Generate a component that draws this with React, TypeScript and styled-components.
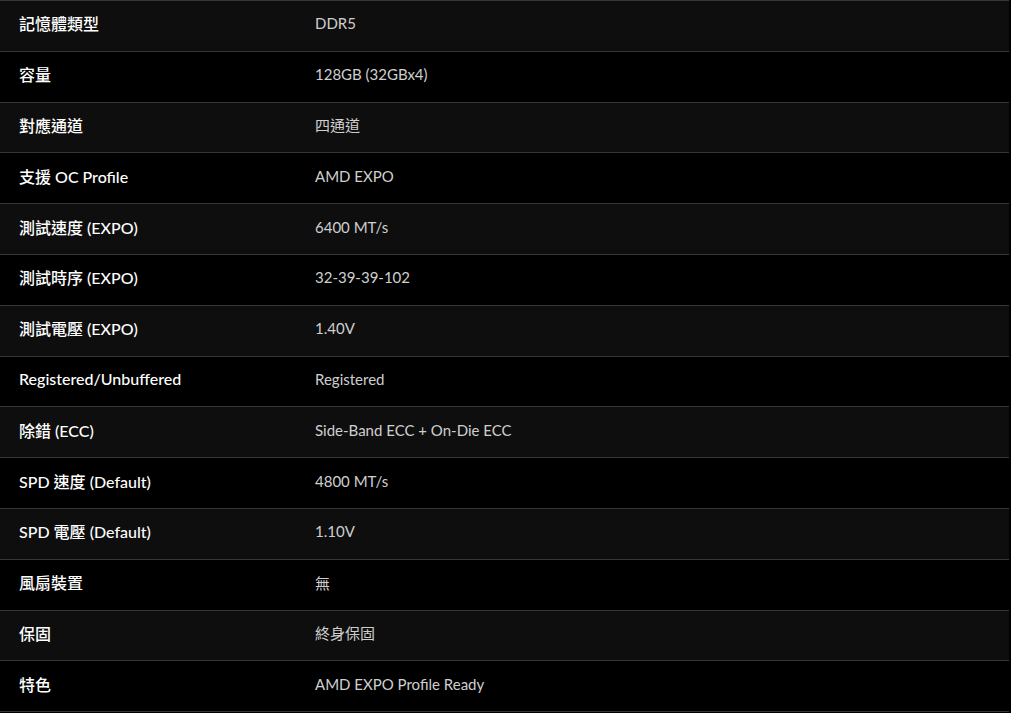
import React from "react";
import styled, { createGlobalStyle } from "styled-components";

const GlobalStyle = createGlobalStyle`
  html, body {
    margin: 0;
    padding: 0;
    background: #000;
  }
  body {
    font-family: Lato, "Noto Sans CJK TC", sans-serif;
  }
`;

const Table = styled.div`
  width: 1009px;
  display: flex;
  flex-direction: column;
  border-top: 1px solid #363636;
`;

const Row = styled.div<{ $odd: boolean }>`
  box-sizing: border-box;
  height: 50.8px;
  padding-bottom: 5px;
  display: grid;
  grid-template-columns: 315px 1fr;
  align-items: center;
  background: ${(p) => (p.$odd ? "#0e0e0e" : "#000")};
  border-bottom: 1px solid #363636;
`;

const Label = styled.div`
  padding-left: 19px;
  color: #fff;
  font-size: 16px;
  font-weight: 500;
  font-family: Lato, "Noto Sans CJK TC", sans-serif;
  white-space: nowrap;
`;

const Value = styled.div`
  color: #cfcfcf;
  font-size: 15px;
  font-weight: 400;
  font-family: Lato, "Noto Sans CJK TC", sans-serif;
  white-space: nowrap;
`;

const rows: [string, string][] = [
  ["記憶體類型", "DDR5"],
  ["容量", "128GB (32GBx4)"],
  ["對應通道", "四通道"],
  ["支援 OC Profile", "AMD EXPO"],
  ["測試速度 (EXPO)", "6400 MT/s"],
  ["測試時序 (EXPO)", "32-39-39-102"],
  ["測試電壓 (EXPO)", "1.40V"],
  ["Registered/Unbuffered", "Registered"],
  ["除錯 (ECC)", "Side-Band ECC + On-Die ECC"],
  ["SPD 速度 (Default)", "4800 MT/s"],
  ["SPD 電壓 (Default)", "1.10V"],
  ["風扇裝置", "無"],
  ["保固", "終身保固"],
  ["特色", "AMD EXPO Profile Ready"],
];

export default function App() {
  return (
    <>
      <GlobalStyle />
      <Table>
        {rows.map(([k, v], i) => (
          <Row key={k} $odd={i % 2 === 0}>
            <Label>{k}</Label>
            <Value>{v}</Value>
          </Row>
        ))}
      </Table>
    </>
  );
}
